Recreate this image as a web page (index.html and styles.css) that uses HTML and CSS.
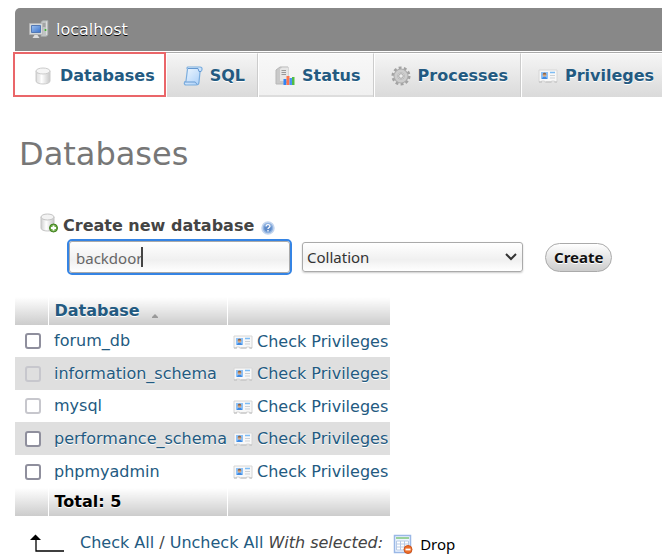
FILE: index.html
```html
<!DOCTYPE html>
<html lang="en">
<head>
<meta charset="utf-8">
<title>localhost | phpMyAdmin</title>
<link rel="stylesheet" href="styles.css">
</head>
<body>
<svg class="defs" aria-hidden="true">
  <defs>
    <linearGradient id="metal"><stop offset="0" stop-color="#cfcfcf"/><stop offset=".4" stop-color="#fff"/><stop offset="1" stop-color="#c8c8c8"/></linearGradient>
    <linearGradient id="blue" x2="1" y2="1"><stop offset="0" stop-color="#f2f9ff"/><stop offset="1" stop-color="#a6cdf8"/></linearGradient>
    <linearGradient id="screen" x2="1" y2="1"><stop offset="0" stop-color="#9cc0f0"/><stop offset="1" stop-color="#3c74cc"/></linearGradient>
    <symbol id="i-db" viewBox="0 0 20 20">
      <path d="M3 5v10c0 4 14 4 14 0V5z" fill="url(#metal)" stroke="#ccc"/>
      <ellipse cx="10" cy="5" rx="7" ry="3" fill="#f5f5f5" stroke="#ccc"/>
      <path d="M5 8v8" stroke="#eee"/>
    </symbol>
    <symbol id="i-card" viewBox="0 0 20 16">
      <path d="M1 2h18v12h-2.500v-1h-3v1h-7v-1h-3v1H1z" fill="#f8f8f8" stroke="#d6d6d6"/>
      <path d="M1 14h3m3.500 0h6m3 0H19" stroke="#bdbdbd"/>
      <path d="M3 4h7v7H3z" fill="#8cc1f8"/>
      <path d="M4 11c0-3.500 5-3.500 5 0z" fill="#3f8ae2"/>
      <circle cx="6.500" cy="7" r="1.800" fill="#d9a67c"/>
      <path d="M4.700 6.500c0-2.500 3.600-2.500 3.600 0z" fill="#8a6346"/>
      <path d="M12 4.500h5" stroke="#7dbcf4" stroke-width="1.500"/>
      <path d="M12 7.500h5m-5 2.500h5" stroke="#cdd1d5"/>
    </symbol>
  </defs>
</svg>

<header class="server">
  <svg class="icon20" viewBox="0 0 20 20" aria-hidden="true">
    <path d="M12 2l2-1.500h5V15l-2 1.500h-5z" fill="#c0c4c4" stroke="#a4a8a8" stroke-width=".7"/>
    <path d="M13 4h3.500M13 6h3.500" stroke="#858585"/>
    <path d="M17.500 1.500V15" stroke="#ddd"/>
    <circle cx="16.500" cy="10" r="1" fill="#36b52c"/>
    <path d="M.5 3.500h13v11H.5z" fill="#d5d9da" stroke="#b4b4b4" stroke-width=".7"/>
    <path d="M2.500 5.500h9v7h-9z" fill="url(#screen)" stroke="#5479b4"/>
    <path d="M5.500 15h3l2 3h-7z" fill="#ddd"/>
  </svg>
  <a href="#">localhost</a>
</header>

<nav class="tabs">
  <a class="tab active" href="#"><svg class="icon20" aria-hidden="true"><use href="#i-db"/></svg>Databases</a>
  <a class="tab" href="#"><svg class="icon20" viewBox="0 0 20 20" aria-hidden="true">
    <path d="M5 1h12c3 0 2.500 4.500 0 5l-1 10c0 2-1 3-3 3H3c-2.500 0-2-4 0-4L4.500 3C3.500 2.500 4 1 5 1z" fill="url(#blue)" stroke="#7badde" stroke-width="1.200"/>
    <path d="M5 2.500h10l1 3h2M2 16h10c1 0 1 2 2 2" fill="none" stroke="#6498d0"/>
  </svg>SQL</a>
  <a class="tab" href="#"><svg class="icon20" viewBox="0 0 20 20" aria-hidden="true">
    <path d="M1 4l4-3h8v14l-3 3H1z" fill="#c9c9c9" stroke="#b7b7b7"/>
    <path d="M5 3l2-1.500h6V15H5z" fill="#e6e6e6"/>
    <path d="M6.500 4.500H11m-4.500 2H11m-4.500 2H11" stroke="#999"/>
    <path d="M8.500 13h3v6h-3z" fill="#3284f4"/><path d="M11.500 10h3v9h-3z" fill="#ff744e"/><path d="M14.500 12H17v7h-2.500z" fill="#4b91f5"/><path d="M17 11h2.500v8H17z" fill="#50bd45"/>
  </svg>Status</a>
  <a class="tab" href="#"><svg class="icon20" viewBox="0 0 20 20" aria-hidden="true">
    <circle cx="10" cy="10" r="8" fill="none" stroke="#a2a2a2" stroke-width="3" stroke-dasharray="2.800 2.227"/>
    <circle cx="10" cy="10" r="5.300" fill="none" stroke="#adadad" stroke-width="4.500"/>
    <circle cx="10" cy="10" r="5" fill="none" stroke="#cdcdcd" stroke-width="3"/>
    <circle cx="10" cy="10" r="2.300" fill="#eee" stroke="#a5a5a5"/>
  </svg>Processes</a>
  <a class="tab" href="#"><svg class="card" aria-hidden="true"><use href="#i-card"/></svg>Privileges</a>
</nav>

<main>
  <h1>Databases</h1>

  <form class="create">
    <div class="create-title">
      <svg class="icon20" viewBox="0 0 20 20" aria-hidden="true">
        <path d="M2 4v11c0 4 13 4 13 0V4z" fill="url(#metal)" stroke="#c4c4c4"/>
        <ellipse cx="8.500" cy="4" rx="6.500" ry="3" fill="#f3f3f3" stroke="#c4c4c4"/>
        <circle cx="14.500" cy="15" r="4" fill="#6dab45" stroke="#40801f"/>
        <path d="M14.500 12.500v5M12 15h5" stroke="#fff" stroke-width="1.800"/>
      </svg>
      <label for="new-db">Create new database</label>
      <a class="help" href="#" aria-label="Documentation"><svg viewBox="0 0 14 14" aria-hidden="true">
        <circle cx="7" cy="7" r="6" fill="#8fb2e0" stroke="#c3d5ee" stroke-width="1.500"/>
        <circle cx="7" cy="7" r="3.800" fill="#5d8ac9"/>
        <path d="M5 5.500c0-2.500 4-2.500 4-.3C9 6.500 7 6.500 7 8M7 9v1.500" fill="none" stroke="#fff" stroke-width="1.300"/>
      </svg></a>
    </div>
    <div class="create-fields">
      <span class="field"><input id="new-db" type="text" value="backdoor"><span class="caret" aria-hidden="true"></span></span>
      <span class="select"><select aria-label="Collation"><option>Collation</option></select><svg viewBox="0 0 12 8" aria-hidden="true"><path d="M1 1l5 5 5-5" fill="none" stroke="#333" stroke-width="2"/></svg></span>
      <button type="button">Create</button>
    </div>
  </form>

  <table class="databases">
    <thead>
      <tr><th></th><th><a href="#">Database<svg class="sort" viewBox="0 0 6 4" aria-hidden="true"><path d="M0 4V3l3-3 3 3v1z" fill="#999"/></svg></a></th><th></th></tr>
    </thead>
    <tbody>
      <tr><td><input type="checkbox" aria-label="forum_db"></td><td><a href="#">forum_db</a></td><td><a class="check" href="#"><svg class="card" aria-hidden="true"><use href="#i-card"/></svg>Check Privileges</a></td></tr>
      <tr><td><input type="checkbox" aria-label="information_schema" disabled></td><td><a href="#">information_schema</a></td><td><a class="check" href="#"><svg class="card" aria-hidden="true"><use href="#i-card"/></svg>Check Privileges</a></td></tr>
      <tr><td><input type="checkbox" aria-label="mysql" disabled></td><td><a href="#">mysql</a></td><td><a class="check" href="#"><svg class="card" aria-hidden="true"><use href="#i-card"/></svg>Check Privileges</a></td></tr>
      <tr><td><input type="checkbox" aria-label="performance_schema"></td><td><a href="#">performance_schema</a></td><td><a class="check" href="#"><svg class="card" aria-hidden="true"><use href="#i-card"/></svg>Check Privileges</a></td></tr>
      <tr><td><input type="checkbox" aria-label="phpmyadmin"></td><td><a href="#">phpmyadmin</a></td><td><a class="check" href="#"><svg class="card" aria-hidden="true"><use href="#i-card"/></svg>Check Privileges</a></td></tr>
    </tbody>
    <tfoot>
      <tr><th></th><th>Total: 5</th><th></th></tr>
    </tfoot>
  </table>

  <div class="actions">
    <svg class="arrow" viewBox="0 0 34 18" aria-hidden="true"><path d="M0 6l5.500-5.500L11 6z"/><path d="M6 5v12h28" fill="none" stroke="#000" stroke-width="1.300"/></svg>
    <span><a href="#">Check All</a> / <a href="#">Uncheck All</a> <em>With selected:</em></span>
    <button class="drop" type="button"><svg class="icon20" viewBox="0 0 20 20" aria-hidden="true">
      <path d="M1.500 1.500h16v17h-16z" fill="#edf5ff" stroke="#9ab8e6" stroke-width="1.500"/>
      <path d="M3 4h13" stroke="#7cc57a" stroke-width="1.500"/>
      <path d="M3.500 7h12v9h-12zM7.500 7v9M11.500 7v9M3.500 10h12M3.500 13h12" fill="#fff" stroke="#b7cae6"/>
      <circle cx="15" cy="15.500" r="4" fill="#ed6f29" stroke="#cb5520"/>
      <path d="M12.500 15.500h5" stroke="#fff" stroke-width="1.800"/>
    </svg>Drop</button>
  </div>
</main>
</body>
</html>
```

FILE: styles.css
```css
* { box-sizing: border-box; }

body {
  margin: 0;
  padding: 8px 0 0 15px;
  background: #fff;
  color: #444;
  font: 16px/20px "DejaVu Sans", sans-serif;
  overflow-x: hidden;
}

a { color: #235a81; text-decoration: none; }
svg { display: block; flex: none; }
.defs { position: absolute; width: 0; height: 0; }
.icon20 { width: 20px; height: 20px; }
.card { width: 20px; height: 16px; }

.server {
  display: flex;
  align-items: center;
  gap: 7px;
  height: 43px;
  padding-left: 14px;
  background: #888;
  border-radius: 5px 0 0 0;
}
.server a { color: #fff; text-shadow: 0 1px 0 #000; }

.tabs {
  display: flex;
  height: 45px;
  margin-top: 1px;
  border-top: 1px solid #aaa;
}
.tab {
  display: flex;
  flex: none;
  align-items: center;
  gap: 7px;
  padding: 0 12px 0 16px;
  background: linear-gradient(#f5f5f5, #dadada);
  border-right: 1px solid #ccc;
  border-left: 1px solid #fff;
  border-top: 1px solid #fff;
  font-weight: bold;
  text-shadow: 0 1px 0 #fff;
}
.tab.active {
  margin: -1px 0 0 -2px;
  padding: 2px 9px 0 18px;
  background: #fff;
  border: 2px solid #ea6669;
}
.tab:nth-child(3) { background: linear-gradient(#f8f8f8, #f0f0f0); box-shadow: inset 0 -2px 0 #ddd; }

h1 {
  margin: 37px 4px 35px;
  color: #777;
  font-size: 32px;
  font-weight: normal;
  line-height: 40px;
}

.create { padding-left: 24px; }
.create-title { display: flex; align-items: center; gap: 4px; font-weight: bold; }
.create-title label { padding-top: 7px; }
.help { padding: 11px 0 0 3px; }
.help svg { width: 14px; height: 14px; }

.create-fields {
  display: flex;
  align-items: center;
  gap: 11px;
  padding: 5px 0 0 30px;
}
.create-fields input,
.create-fields select {
  width: 221px;
  height: 30px;
  background: linear-gradient(#fff, #f0f0f0 60%, #fff);
  border: 1px solid #aaa;
  border-radius: 3px;
  font: 15px/20px "Noto Sans", sans-serif;
}
.field, .select { display: flex; position: relative; }
.create-fields input {
  height: 32px;
  padding: 2px 6px 0;
  outline: 2px solid #3584e4;
  color: #666;
}
.caret {
  position: absolute;
  top: 6px;
  left: 72px;
  width: 2px;
  height: 20px;
  background: #444;
}
.create-fields select {
  margin-left: 1px;
  padding: 0 4px;
  appearance: none;
  color: #333;
  box-shadow: 0 1px 2px #ccc;
}
.select svg { position: absolute; top: 11px; right: 6px; width: 12px; height: 8px; pointer-events: none; }
.create-fields button {
  height: 29px;
  margin-left: 11px;
  padding: 0 8px;
  background: linear-gradient(#fff, #ccc);
  border: 1px solid #aaa;
  border-radius: 15px;
  color: #111;
  font: bold 15px/20px "Noto Sans", sans-serif;
  text-shadow: 0 1px 0 #fff;
}

.databases { margin-top: 24px; border-collapse: collapse; text-shadow: 0 1px 0 #fff; }
.databases th, .databases td { height: 32px; padding: 1px 2px 0 5px; text-align: left; }
.databases th { height: 28px; background: linear-gradient(#fff, #ccc); color: #000; }
.databases th + th { border-left: 1px solid #fff; }
.databases th:nth-child(2), .databases td:nth-child(2) { padding: 0 1px 0 6px; }
.databases tbody tr:nth-child(even) { background: #dfdfdf; }
.databases tbody tr:nth-child(even) td,
.databases tbody tr:last-child td { height: 33px; }
.databases th:first-child, .databases td:first-child { padding: 0 7px 0 10px; }
.sort { display: inline-block; width: 6px; height: 4px; margin-left: 12px; vertical-align: -2px; }
.check { display: flex; align-items: center; gap: 4px; }
.databases input {
  display: block;
  width: 16px;
  height: 16px;
  margin: 0;
  appearance: none;
  background: #fff;
  border: 2px solid #8f8f9d;
  border-radius: 3px;
}
.databases input:disabled { border-color: #c7c7cd; background: transparent; }

.actions { display: flex; align-items: center; margin-top: 15px; padding-left: 15px; }
.arrow { width: 34px; height: 18px; margin-right: 16px; }
.drop {
  display: flex;
  align-items: center;
  gap: 7px;
  margin-left: 10px;
  padding: 3px 0 0;
  background: none;
  border: 0;
  color: #000;
  font: 15px/20px "Noto Sans", sans-serif;
}
```
